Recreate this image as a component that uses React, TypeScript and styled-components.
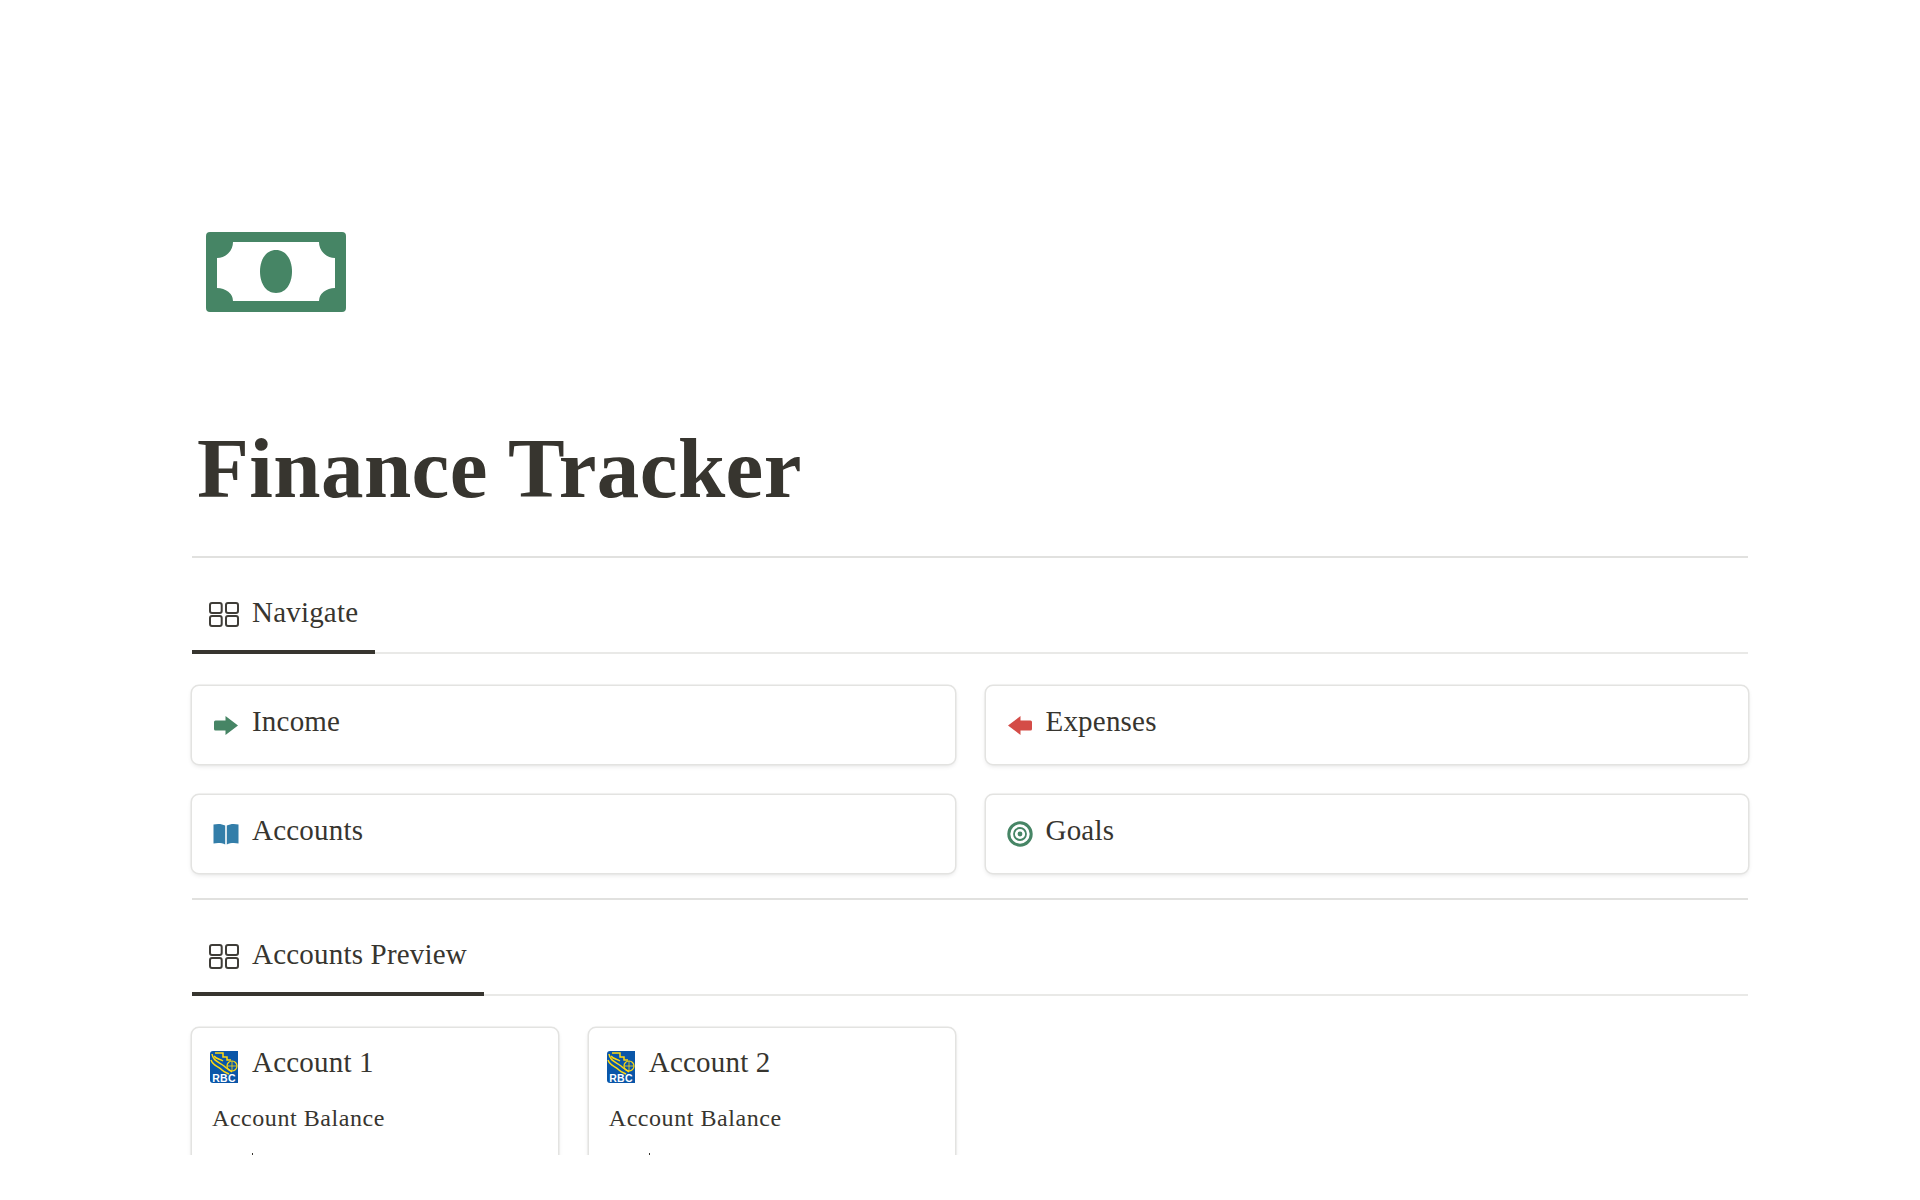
import styled, { createGlobalStyle } from "styled-components";
import type { ReactNode } from "react";

const GlobalStyle = createGlobalStyle`
  html, body {
    margin: 0;
    padding: 0;
    background: #fff;
  }
`;

const Page = styled.main`
  height: 1155px;
  overflow: hidden;
  box-sizing: border-box;
  padding: 232px 172px 0 192px;
  font-family: "Liberation Serif", "Times New Roman", serif;
  color: #37352f;
`;

const PageIcon = styled.svg`
  display: block;
  width: 140px;
  height: 80px;
  margin-left: 14px;
`;

const Title = styled.h1`
  margin: 108px 0 40px 5px;
  font-size: 85px;
  line-height: 96px;
  font-weight: 700;
  letter-spacing: 0.4px;
`;

const Divider = styled.hr`
  margin: 0;
  border: 0;
  height: 2px;
  background: #e1e1df;
`;

const TabBar = styled.div`
  display: flex;
  height: 96px;
  box-sizing: border-box;
  border-bottom: 2px solid #e9e9e7;
`;

const Tab = styled.div`
  display: flex;
  align-items: center;
  gap: 13px;
  height: 96px;
  box-sizing: border-box;
  padding: 16px 17px 0;
  border-bottom: 4px solid #37352f;
  font-size: 29px;
  letter-spacing: 0.2px;

  svg {
    margin-top: 4px;
  }
`;

const NavGrid = styled.div`
  display: grid;
  grid-template-columns: 1fr 1fr;
  gap: 31px;
  margin: 32px 0 25px;
`;

const Card = styled.div`
  border-radius: 7px;
  background: #fff;
  box-shadow: 0 0 0 1.5px #e3e3e1, 0 2px 5px rgba(15, 15, 15, 0.12);
`;

const NavCard = styled(Card)`
  display: flex;
  align-items: center;
  gap: 11px;
  height: 78px;
  box-sizing: border-box;
  padding: 0 19px;
  font-size: 29px;
  letter-spacing: 0.2px;
`;

const NavLabel = styled.span`
  padding-bottom: 8px;
`;

const IconSlot = styled.span`
  display: flex;
  justify-content: center;
  width: 30px;
  flex: none;
`;

const AccountGrid = styled.div`
  display: grid;
  grid-template-columns: repeat(4, 1fr);
  gap: 31px;
  margin-top: 32px;
`;

const AccountCard = styled(Card)`
  height: 190px;
  box-sizing: border-box;
  padding: 17px 18px 0;
`;

const AccountHead = styled.div`
  display: flex;
  align-items: center;
  gap: 12px;
  font-size: 29px;
  letter-spacing: 0.2px;
  line-height: 34px;
`;

const AccountName = styled.span`
  padding-bottom: 10px;
`;

const BalanceLabel = styled.div`
  margin: 14px 0 0 2px;
  font-size: 24px;
  line-height: 30px;
  letter-spacing: 0.55px;
`;

const ClippedMark = styled.div`
  width: 1px;
  height: 2px;
  margin: 20px 0 0 42px;
  background: #37352f;
`;

const BoardIcon = () => (
  <svg width="30" height="25" viewBox="0 0 30 25" fill="none" stroke="#3f3d38" strokeWidth="2">
    <rect x="1" y="1" width="11.7" height="10" rx="2" />
    <rect x="17" y="1" width="12" height="10" rx="2" />
    <rect x="1" y="14" width="11.7" height="10" rx="2" />
    <rect x="17" y="14" width="12" height="10" rx="2" />
  </svg>
);

const ArrowRight = () => (
  <svg width="24" height="19" viewBox="0 0 24 19" fill="#468565">
    <path d="M1.5 4.5H11.5V0L24 9.5L11.5 19V14.5H1.5Q0 14.5 0 13V6Q0 4.5 1.5 4.5Z" />
  </svg>
);

const ArrowLeft = () => (
  <svg width="24" height="19" viewBox="0 0 24 19" fill="#d44c47">
    <path d="M22.5 4.5H12.5V0L0 9.5L12.5 19V14.5H22.5Q24 14.5 24 13V6Q24 4.5 22.5 4.5Z" />
  </svg>
);

const BookIcon = () => (
  <svg width="26" height="22" viewBox="0 0 26 22" fill="#337ea9">
    <path d="M0.5 1.5C4.5 0.5 9 0.7 12.2 2.6V21.5C9 20 4.5 19.6 0.5 20.6Z" />
    <path d="M25.5 1.5C21.5 0.5 17 0.7 13.8 2.6V21.5C17 20 21.5 19.6 25.5 20.6Z" />
  </svg>
);

const TargetIcon = () => (
  <svg width="26" height="26" viewBox="0 0 26 26" fill="none" stroke="#468565">
    <circle cx="13" cy="13" r="11.2" strokeWidth="3" />
    <circle cx="13" cy="13" r="6" strokeWidth="1.8" />
    <circle cx="13" cy="13" r="2.4" fill="#468565" strokeWidth="0" />
  </svg>
);

const BankLogo = () => (
  <svg width="30" height="32" viewBox="0 0 30 32">
    <path d="M3 0H28V32H3Q0 32 0 29V3Q0 0 3 0Z" fill="#0a56a8" />
    <g fill="none" stroke="#ffd90f" strokeWidth="1.5">
      <path d="M2 3C3 10 9 11 14 15C17 18 20 19 22 21" />
      <path d="M1 9C3 15 8 15 12 19C14 21 17 22 19 23" />
      <path d="M5 2H13V6H17V9H21" />
      <path d="M4 5C6 8 10 8 13 10" />
      <circle cx="22" cy="15" r="5" strokeWidth="1.2" />
      <path d="M17 15H27M22 10V20" strokeWidth="0.8" />
    </g>
    <text
      x="14"
      y="30.5"
      fill="#fff"
      fontFamily="Liberation Sans, Arial, sans-serif"
      fontSize="10.5"
      fontWeight="700"
      textAnchor="middle"
    >
      RBC
    </text>
  </svg>
);

function SectionTab({ children }: { children: ReactNode }) {
  return (
    <TabBar>
      <Tab>
        <BoardIcon />
        {children}
      </Tab>
    </TabBar>
  );
}

function NavItem({ icon, label }: { icon: ReactNode; label: string }) {
  return (
    <NavCard>
      <IconSlot>{icon}</IconSlot>
      <NavLabel>{label}</NavLabel>
    </NavCard>
  );
}

function AccountItem({ name }: { name: string }) {
  return (
    <AccountCard>
      <AccountHead>
        <BankLogo />
        <AccountName>{name}</AccountName>
      </AccountHead>
      <BalanceLabel>Account Balance</BalanceLabel>
      <ClippedMark />
    </AccountCard>
  );
}

export default function App() {
  return (
    <>
      <GlobalStyle />
      <Page>
        <PageIcon viewBox="0 0 140 80">
          <path
            fillRule="evenodd"
            fill="#468565"
            d="M4 0H136A4 4 0 0 1 140 4V76A4 4 0 0 1 136 80H4A4 4 0 0 1 0 76V4A4 4 0 0 1 4 0ZM27 10A16 16 0 0 1 11 26V56A16 13 0 0 1 27 69H113A16 13 0 0 1 129 56V26A16 16 0 0 1 113 10Z"
          />
          <path
            fill="#468565"
            d="M70 18C81 18 86 29 86 39.5C86 50 81 61 70 61C59 61 54 50 54 39.5C54 29 59 18 70 18Z"
          />
        </PageIcon>
        <Title>Finance Tracker</Title>
        <Divider />
        <SectionTab>Navigate</SectionTab>
        <NavGrid>
          <NavItem icon={<ArrowRight />} label="Income" />
          <NavItem icon={<ArrowLeft />} label="Expenses" />
          <NavItem icon={<BookIcon />} label="Accounts" />
          <NavItem icon={<TargetIcon />} label="Goals" />
        </NavGrid>
        <Divider />
        <SectionTab>Accounts Preview</SectionTab>
        <AccountGrid>
          <AccountItem name="Account 1" />
          <AccountItem name="Account 2" />
        </AccountGrid>
      </Page>
    </>
  );
}
